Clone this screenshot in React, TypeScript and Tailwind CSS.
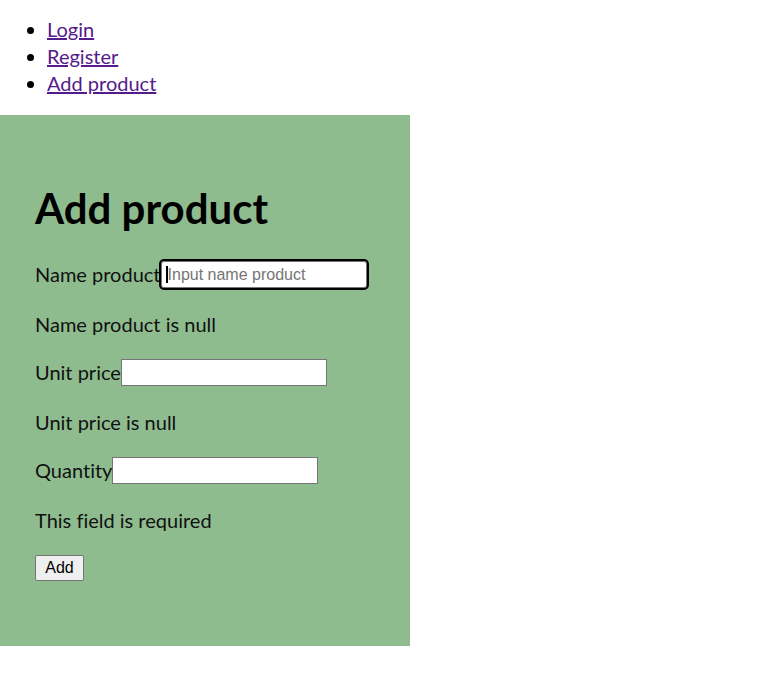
import React from "react";

const font = "font-['Lato','Open_Sans',sans-serif] [font-variant-ligatures:none]";

function FieldGroup({
  label,
  placeholder,
  error,
  focused = false,
}: {
  label: string;
  placeholder?: string;
  error: string;
  focused?: boolean;
}) {
  return (
    <div className="flex flex-col">
      <div className="flex h-[27px] items-center">
        <label className="text-[20px] leading-[27px] text-[#111]">{label}</label>
        <div className="relative">
          <input
            type="text"
            placeholder={placeholder}
            className={
              "block h-[27px] w-[206px] border border-[#767676] bg-white pl-[6px] pr-[3px] font-['Liberation_Sans',Arial,sans-serif] text-[16px] text-black placeholder:text-[#757575] " +
              (focused ? "rounded-[3px] outline-2 outline-black outline-offset-0" : "outline-none")
            }
          />
          {focused && <span className="absolute left-[5px] top-[5px] h-[17px] w-[2px] bg-black" />}
        </div>
      </div>
      <p className="mb-[21px] mt-[23px] text-[20px] leading-[27px] text-[#111]">{error}</p>
    </div>
  );
}

export default function App() {
  return (
    <div className={`min-h-[677px] w-[777px] bg-white ${font}`}>
      {/* Nav */}
      <ul className="list-disc pb-[18px] pl-[47px] pt-[16px] text-[20px] leading-[27px]">
        <li>
          <a href="#" className="text-[#551a8b] underline">Login</a>
        </li>
        <li>
          <a href="#" className="text-[#551a8b] underline">Register</a>
        </li>
        <li>
          <a href="#" className="text-[#551a8b] underline">Add product</a>
        </li>
      </ul>

      {/* Form panel */}
      <div className="h-[531px] w-[410px] bg-[#8fbc8f] px-[35px] pt-[68px]">
        <h1 className="mb-[28px] text-[42px] font-bold leading-[50px] text-black">Add product</h1>
        <FieldGroup label="Name product" placeholder="Input name product" error="Name product is null" focused />
        <FieldGroup label="Unit price" error="Unit price is null" />
        <FieldGroup label="Quantity" error="This field is required" />
        <button className="-mt-[6px] h-[26px] w-[49px] rounded-[2px] border border-[#767676] bg-[#efefef] font-['Liberation_Sans',Arial,sans-serif] text-[16px] text-black">
          Add
        </button>
      </div>
    </div>
  );
}
